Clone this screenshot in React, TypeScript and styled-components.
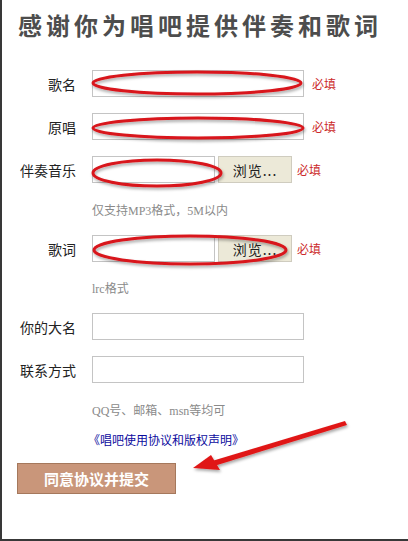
import styled, { createGlobalStyle } from "styled-components";

const GlobalStyle = createGlobalStyle`
  html, body {
    margin: 0;
    padding: 0;
    background: #ffffff;
  }
  * {
    box-sizing: border-box;
  }
`;

const Page = styled.div`
  position: relative;
  width: 408px;
  height: 541px;
  background: #fff;
  border-left: 2px solid #383838;
  border-bottom: 2px solid #383838;
  padding: 10px 0 0 16px;
  font-family: "Noto Sans CJK SC", "Liberation Sans", sans-serif;
`;

const Title = styled.h1`
  margin: 0;
  font-size: 24px;
  line-height: 30px;
  letter-spacing: 4px;
  font-weight: 700;
  color: #4d4d4d;
`;

const Form = styled.form`
  display: flex;
  flex-direction: column;
  gap: 16px;
  margin-top: 30px;
`;

const Field = styled.div`
  display: flex;
  flex-direction: column;
`;

const Row = styled.div`
  display: grid;
  grid-template-columns: 58px auto auto;
  column-gap: 16px;
  align-items: center;
  justify-content: start;
`;

const Label = styled.label`
  text-align: right;
  font-size: 14px;
  color: #222;
  white-space: nowrap;
`;

const TextBox = styled.input<{ $w: number }>`
  width: ${({ $w }) => $w}px;
  height: 27px;
  margin: 0;
  border: 1px solid #c4c4c4;
  background: #fff;
  padding: 0 4px;
  outline: none;
`;

const FileGroup = styled.div`
  display: flex;
  align-items: center;
  gap: 3px;
`;

const Browse = styled.button`
  width: 74px;
  height: 27px;
  margin: 0;
  padding: 0;
  border: 1px solid #cfccbf;
  background: #ece9d8;
  font-family: "Noto Sans CJK SC", sans-serif;
  font-size: 14px;
  color: #222;
  letter-spacing: 1px;
`;

const Required = styled.span<{ $shift: number }>`
  margin-left: ${({ $shift }) => $shift}px;
  font-size: 12px;
  color: #cc2a2a;
`;

const Hint = styled.div<{ $top: number }>`
  margin: ${({ $top }) => $top}px 0 0 74px;
  font-family: "Liberation Serif", "Noto Sans CJK SC", serif;
  font-size: 12px;
  line-height: 16px;
  color: #8a8a8a;
`;

const AgreementLink = styled.a`
  display: block;
  margin: -3px 0 0 70px;
  font-size: 12px;
  line-height: 16px;
  color: #0b0b9e;
  text-decoration: none;
`;

const Submit = styled.button`
  align-self: flex-start;
  width: 159px;
  height: 31px;
  margin: -1px 0 0 -1px;
  border: 1px solid #a5785c;
  background: #c9967a;
  color: #fff;
  font-family: "Noto Sans CJK SC", sans-serif;
  font-size: 15px;
  font-weight: 700;
`;

const Annotations = styled.svg`
  position: absolute;
  left: -2px;
  top: 0;
  width: 408px;
  height: 541px;
  pointer-events: none;
`;

const fields = [
  { label: "歌名", kind: "text", required: true },
  { label: "原唱", kind: "text", required: true },
  { label: "伴奏音乐", kind: "file", required: true, hint: "仅支持MP3格式，5M以内" },
  { label: "歌词", kind: "file", required: true, hint: "lrc格式" },
  { label: "你的大名", kind: "text", required: false },
  { label: "联系方式", kind: "text", required: false, hint: "QQ号、邮箱、msn等均可" },
];

function App() {
  return (
    <>
      <GlobalStyle />
      <Page>
        <Title>感谢你为唱吧提供伴奏和歌词</Title>
        <Form onSubmit={(e) => e.preventDefault()}>
          {fields.map((f) => (
            <Field key={f.label}>
              <Row>
                <Label>{f.label}</Label>
                {f.kind === "file" ? (
                  <FileGroup>
                    <TextBox $w={123} readOnly />
                    <Browse type="button">浏览...</Browse>
                  </FileGroup>
                ) : (
                  <TextBox $w={212} />
                )}
                {f.required && (
                  <Required $shift={f.kind === "file" ? -11 : -8}>必填</Required>
                )}
              </Row>
              {f.hint && <Hint $top={f.label === "歌词" ? 19 : 20}>{f.hint}</Hint>}
            </Field>
          ))}
          <AgreementLink href="#">《唱吧使用协议和版权声明》</AgreementLink>
          <Submit type="submit">同意协议并提交</Submit>
        </Form>

        <Annotations viewBox="0 0 408 541">
          <defs>
            <filter id="shade" x="-10%" y="-40%" width="120%" height="180%">
              <feDropShadow dx="1" dy="2" stdDeviation="1.5" floodColor="#000" floodOpacity="0.35" />
            </filter>
          </defs>
          <g fill="none" stroke="#d8141a" strokeWidth="3" filter="url(#shade)">
            <ellipse cx="197" cy="83" rx="104" ry="11" />
            <ellipse cx="198" cy="128" rx="105" ry="10" />
            <ellipse cx="157" cy="173" rx="64" ry="13" />
            <ellipse cx="190" cy="250" rx="96" ry="14" />
          </g>
          <g fill="#e01818" filter="url(#shade)">
            <polygon points="345,421 347,425 214,466 212,461" />
            <polygon points="193,468 211,455 220,470" />
          </g>
        </Annotations>
      </Page>
    </>
  );
}

export default App;
